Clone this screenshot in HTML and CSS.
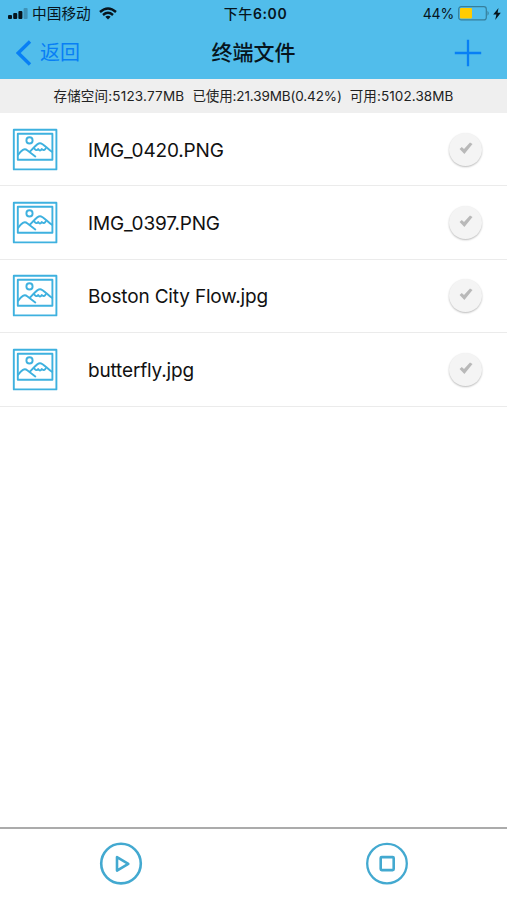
FILE: index.html
```html
<!DOCTYPE html>
<html lang="zh-CN">
<head>
<meta charset="utf-8">
<title>终端文件</title>
<link rel="stylesheet" href="styles.css">
</head>
<body>
<svg class="defs" width="0" height="0" aria-hidden="true">
  <symbol id="photo" viewBox="0 0 46 43">
    <g fill="none" stroke="#3eb1df" stroke-width="1.9" stroke-linejoin="round" stroke-linecap="round">
      <rect x="1.8" y="1.8" width="42.6" height="39.6"/>
      <rect x="5.8" y="5.8" width="34.6" height="26"/>
      <circle cx="17.5" cy="12.4" r="3.1"/>
      <path d="M6 27C9.5 22 12.5 19.8 15.2 22.3L23.3 28.4M17.8 23.8C21.5 20.5 24.5 15.2 28 15.2C31.5 15.2 36 21.5 40.2 23.8M22.6 20.8Q24.8 23.4 26.2 21Q28 24 29.8 21Q31.5 23.2 33.4 20.8"/>
    </g>
  </symbol>
  <symbol id="tick" viewBox="0 0 14 13">
    <path d="M.6 7L2.8 4.9L5 7L11 .5L13.5 2.1L5.4 12Z" fill="#b9b9b9"/>
  </symbol>
</svg>
<header class="header">
  <div class="status">
    <div class="status-left">
      <svg class="signal" viewBox="0 0 20 12" width="20" height="12">
        <rect x="0" y="7" width="4" height="4" rx="1"/><rect x="5.2" y="5" width="4" height="6" rx="1"/><rect x="10.4" y="3" width="4" height="8" rx="1"/><rect x="15.6" y="0" width="4" height="11" rx="1" opacity=".25"/>
      </svg>
      <span class="carrier">中国移动</span>
      <svg class="wifi" viewBox="0 0 18 13" width="18" height="13">
        <path d="M1 5Q9-2.2 17 5M4 8Q9 3.7 14 8" fill="none" stroke="#07151d" stroke-width="2.4"/><path d="M6.3 9.8Q9 7.7 11.7 9.8L9 12.5Z"/>
      </svg>
    </div>
    <span class="time"><span class="period">下午</span>6:00</span>
    <div class="status-right">
      <span class="percent">44%</span>
      <svg class="battery" viewBox="0 0 32 15" width="32" height="15">
        <rect x=".7" y=".7" width="27.6" height="13.2" rx="2.5" fill="none" stroke="#367f9c" stroke-width="1.2"/><rect x="2" y="2" width="12" height="10.6" rx="1" fill="#fc0"/><path d="M29.5 4.8Q32 7.3 29.5 9.8Z" fill="#367f9c"/>
      </svg>
      <svg class="bolt" viewBox="0 0 8 12" width="8" height="12"><path d="M5.5 0L.2 6.6H3.4L2.2 12L7.8 4.8H4.6Z"/></svg>
    </div>
  </div>
  <nav class="nav">
    <div class="back">
      <svg viewBox="0 0 16 26" width="16" height="26"><path d="M14 1.5L2.2 13L14 24.5" fill="none" stroke="#087ff5" stroke-width="3.4"/></svg>
      <span class="back-label">返回</span>
    </div>
    <h1 class="title">终端文件</h1>
    <svg class="add" viewBox="0 0 28 28" width="28" height="28"><path d="M14 .8V27.2M.8 14H27.2" stroke="#087ff5" stroke-width="2.3"/></svg>
  </nav>
</header>
<div class="storage"><span class="total">存储空间:5123.77MB</span><span class="used">已使用:21.39MB(0.42%)</span><span class="free">可用:5102.38MB</span></div>
<ul class="files">
  <li class="file"><svg class="photo"><use href="#photo"/></svg><span class="name">IMG_0420.PNG</span><span class="check"><svg class="tick"><use href="#tick"/></svg></span></li>
  <li class="file"><svg class="photo"><use href="#photo"/></svg><span class="name">IMG_0397.PNG</span><span class="check"><svg class="tick"><use href="#tick"/></svg></span></li>
  <li class="file"><svg class="photo"><use href="#photo"/></svg><span class="name">Boston City Flow.jpg</span><span class="check"><svg class="tick"><use href="#tick"/></svg></span></li>
  <li class="file"><svg class="photo"><use href="#photo"/></svg><span class="name">butterfly.jpg</span><span class="check"><svg class="tick"><use href="#tick"/></svg></span></li>
</ul>
<footer class="controls">
  <svg viewBox="0 0 44 44" width="44" height="44"><g fill="none" stroke="#43a9d0" stroke-width="2.6"><circle cx="22" cy="21.6" r="19.8"/><path d="M18 15.2V28.6L29.3 21.9Z" stroke-linejoin="round"/></g></svg>
  <svg viewBox="0 0 44 44" width="44" height="44"><g fill="none" stroke="#43a9d0" stroke-width="2.3"><circle cx="22" cy="21.6" r="19.8"/><rect x="15.7" y="15.1" width="13" height="13" rx="1" stroke-width="2.6"/></g></svg>
</footer>
</body>
</html>
```

FILE: styles.css
```css
* { box-sizing: border-box; }
body {
  margin: 0;
  height: 900px;
  display: flex;
  flex-direction: column;
  overflow: hidden;
  background: #fff;
  color: #111;
  font-family: Inter, "Noto Sans CJK SC", sans-serif;
}
svg { display: block; flex: none; }
.defs { position: absolute; }
.header { height: 79px; flex: none; background: #51bdeb; }
.status {
  height: 27px;
  display: grid;
  grid-template-columns: 1fr auto 1fr;
  align-items: center;
  padding: 0 6px 0 8px;
  font-size: 14px;
  line-height: 27px;
  color: #07151d;
  fill: #07151d;
}
.status-left, .status-right { display: flex; align-items: center; }
.status-right { justify-content: flex-end; }
.carrier { margin-left: 4px; padding-top: 2px; font-size: 14.7px; line-height: 25px; }
.wifi { margin-left: 8px; }
.time { margin-left: 2px; font-weight: 600; letter-spacing: .6px; }
.period { font-weight: 500; }
.percent { margin-right: 4px; font-size: 14px; letter-spacing: -.2px; }
.bolt { margin-left: 3px; }
.nav {
  height: 52px;
  display: grid;
  grid-template-columns: 1fr auto 1fr;
  align-items: center;
  padding: 0 25px 0 16px;
}
.back { display: flex; align-items: center; color: #087ff5; }
.back-label { margin-left: 8px; font-size: 20px; line-height: 40px; }
.title { margin: 0 0 0 9px; font-size: 21px; line-height: 40px; font-weight: 500; color: #07151d; }
.add { justify-self: end; }
.storage {
  height: 34px;
  flex: none;
  display: flex;
  justify-content: center;
  gap: 8px;
  background: #efefef;
  font-size: 13.5px;
  line-height: 34px;
  white-space: nowrap;
  color: #222;
}
.total { letter-spacing: .2px; }
.used { letter-spacing: -.12px; }
.free { letter-spacing: .1px; }
.files { flex: 1; margin: 0; padding: 0; list-style: none; }
.file {
  height: 73.4px;
  display: flex;
  align-items: center;
  padding: 0 25px 0 12px;
  border-bottom: 1.5px solid #ebebeb;
}
.photo { width: 46px; height: 43px; }
.name { margin-left: 30px; padding-top: 3px; font-size: 19px; line-height: 30px; letter-spacing: -.17px; }
.check {
  width: 33px;
  height: 33px;
  margin-left: auto;
  display: flex;
  align-items: center;
  justify-content: center;
  border-radius: 50%;
  background: #f4f4f4;
  box-shadow: 0 1px 2px #bbb;
}
.tick { width: 14px; height: 13px; margin-bottom: 2px; }
.controls {
  height: 73px;
  flex: none;
  display: flex;
  justify-content: space-between;
  padding: 13px 98px 0 99px;
  border-top: 2px solid #ababab;
}
```
